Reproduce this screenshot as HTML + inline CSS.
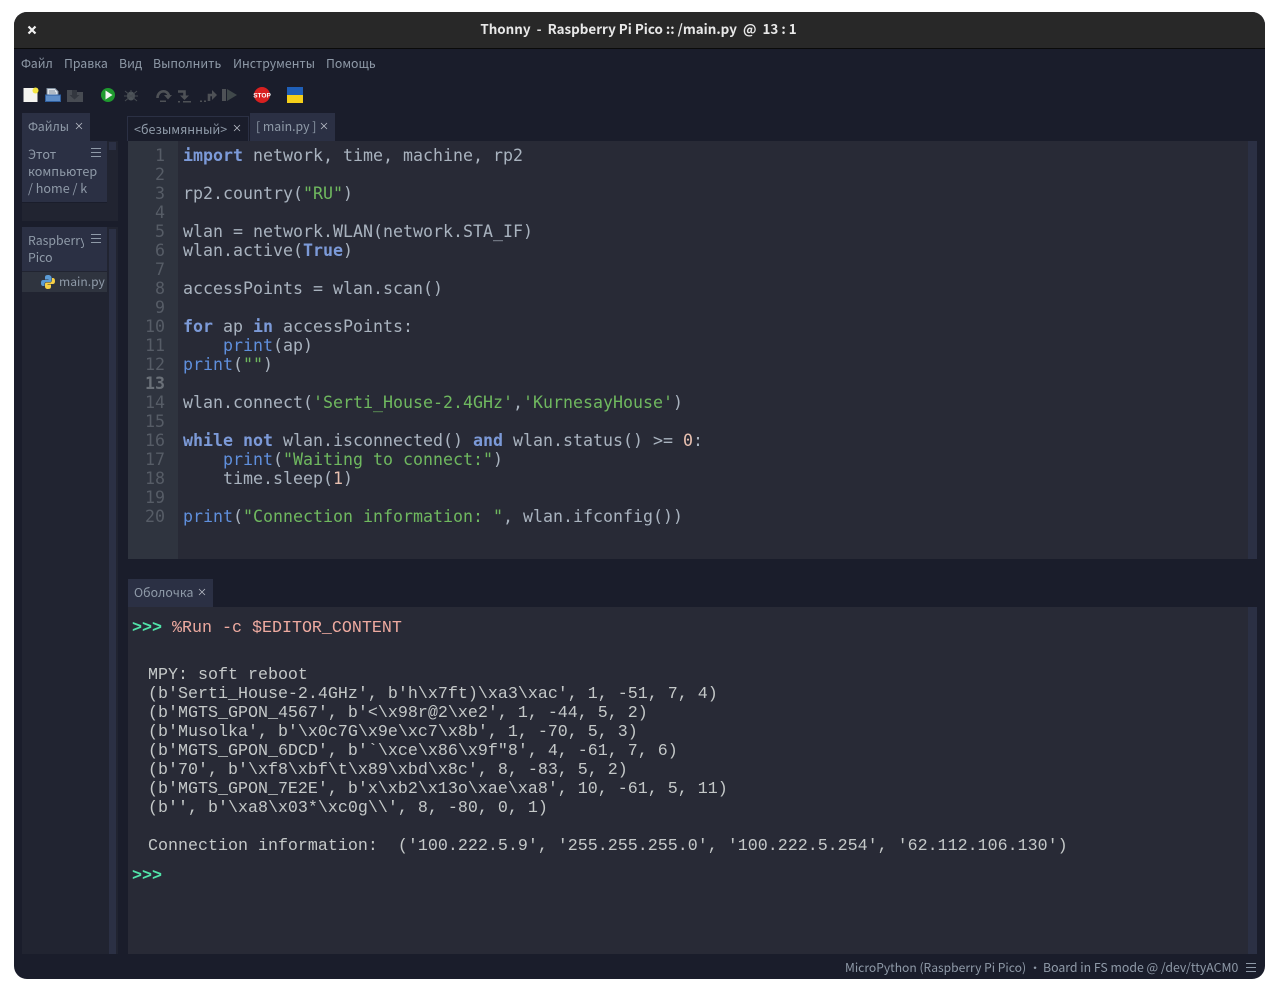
<!DOCTYPE html>
<html><head><meta charset="utf-8"><style>
html,body{margin:0;padding:0;width:1279px;height:996px;background:#fff;overflow:hidden}
.a{position:absolute}
#w{position:absolute;left:14px;top:12px;width:1251px;height:967px;background:#1a1d2b;border-radius:13px 13px 13px 13px;overflow:hidden}
#root{position:absolute;left:0;top:0;width:1279px;height:996px}
.u{position:absolute;font-family:"Noto Sans CJK SC","Liberation Sans",sans-serif;font-size:12.300px;line-height:17px;color:#8f9aa8;white-space:pre}
.m{position:absolute;font-family:"DejaVu Sans Mono","Liberation Mono",monospace;font-size:16.610px;line-height:19px;white-space:pre;color:#a9b3bf}
.k{color:#7c9ad8;font-weight:bold}.b{color:#5f8fdc}.s{color:#6fb85f}.n{color:#e8c0b0}
.g{color:#565c66;text-align:right;width:37px;left:128px}
.o{color:#c4c8c8;font-family:"Liberation Mono","DejaVu Sans Mono",monospace;font-size:16.670px}
</style></head><body><div id="root">
<div id="w"></div>
<div class="a" style="left:14px;top:12px;width:1251px;height:36px;background:#282828;border-radius:13px 13px 0 0"></div>
<div class="a" style="left:14px;top:48px;width:1251px;height:1px;background:#0a0a0a"></div>
<svg class="a" style="left:27px;top:25px" width="10" height="10"><path d="M1.500 1.500L8.500 8.500M8.500 1.500L1.500 8.500" stroke="#f2f2f2" stroke-width="2.200"/></svg>
<div class="u" style="left:-1px;width:1279px;text-align:center;top:20px;color:#e8e8e8;font-weight:bold;font-size:13.400px">Thonny  -  Raspberry Pi Pico :: /main.py  @  13 : 1</div>

<div class="u" style="left:21px;top:55px">Файл</div>
<div class="u" style="left:64px;top:55px">Правка</div>
<div class="u" style="left:119px;top:55px">Вид</div>
<div class="u" style="left:153px;top:55px">Выполнить</div>
<div class="u" style="left:233px;top:55px">Инструменты</div>
<div class="u" style="left:326px;top:55px">Помощь</div>

<svg class="a" style="left:20px;top:84px" width="300" height="22" viewBox="0 0 300 22">
<rect x="3.500" y="4" width="14" height="14" fill="#f4f4f0"/><circle cx="15.500" cy="6.500" r="3" fill="#f5e642"/>
<path d="M27 4.500h8l3 3v6H27z" fill="#e0e4ea" stroke="#8090a0"/><path d="M29 7h6M29 9h7" stroke="#8090a0"/><rect x="25.500" y="11" width="15" height="6.500" fill="#5f8ec8" stroke="#2f5f9f"/>
<path d="M47 6h8l2 2h6v10H47z" fill="#474b52"/><path d="M52 6h5v5h2.500l-5 4.500-5-4.500H52z" fill="#33373f"/>
<circle cx="88" cy="11" r="7" fill="#1f9a2f"/><path d="M85.500 6.500l7 4.500-7 4.500z" fill="#f2f2f2"/>
<ellipse cx="111" cy="12" rx="4" ry="4.500" fill="#4e545a"/><path d="M105 7l12 10M117 7L105 17M104 12h14M111 6v3" stroke="#474c52" stroke-width="1"/>
<path d="M137.500 14c0-8 10-9 11.500-2" fill="none" stroke="#4e5156" stroke-width="2.600"/><path d="M144 11h8l-4 4.500z" fill="#4e5156"/><rect x="140" y="16.500" width="6" height="1.500" fill="#4e5156"/>
<path d="M158 7.500h6.500v5" fill="none" stroke="#4e5156" stroke-width="2.600"/><path d="M160 11.500h9l-4.500 4.500z" fill="#4e5156"/><rect x="158" y="17" width="2" height="1.500" fill="#4e5156"/><rect x="163" y="17" width="8" height="1.500" fill="#4e5156"/>
<path d="M189 17v-6h4" fill="none" stroke="#4e5156" stroke-width="2.600"/><path d="M192 6v10l5-5z" fill="#4e5156"/><rect x="180" y="16.500" width="2" height="1.500" fill="#4e5156"/><rect x="184" y="16.500" width="2" height="1.500" fill="#4e5156"/>
<rect x="202" y="5" width="4" height="12" fill="#4e5156"/><path d="M207 5l10 6-10 6z" fill="#40484a"/>
<circle cx="242" cy="11" r="8" fill="#d82020"/>
<text x="242" y="13.500" font-family="Liberation Sans" font-size="6.500" font-weight="bold" fill="#fff" text-anchor="middle">STOP</text>
<rect x="267" y="3" width="16" height="8" fill="#1f5fb8"/><rect x="267" y="11" width="16" height="8" fill="#f5cf1a"/>
</svg>

<!-- left panels -->
<div class="a" style="left:22px;top:113px;width:68px;height:28px;background:#2b3044"></div>
<div class="u" style="left:28px;top:118px">Файлы</div>
<svg class="a" style="left:75px;top:122px" width="8" height="8"><path d="M1 1L7 7M7 1L1 7" stroke="#b8bcc6" stroke-width=".8"/></svg>
<div class="a" style="left:22px;top:141px;width:96px;height:80px;background:#212431"></div>
<div class="a" style="left:22px;top:141px;width:85px;height:61px;background:#2b3044;border-bottom:1px solid #1a1d2b"></div>
<div class="a" style="left:109px;top:142px;width:9px;height:79px;background:#212431"></div>
<div class="a" style="left:109px;top:142px;width:7px;height:8px;background:#2b3044"></div>
<div class="u" style="left:28px;top:145px;font-size:12.600px">Этот</div>
<div class="u" style="left:28px;top:162px;font-size:12.600px">компьютер</div>
<div class="u" style="left:28px;top:179px;font-size:12.600px">/ home / k</div>
<svg class="a" style="left:91px;top:148px" width="10" height="10"><path d="M0 .5h10M0 4.500h10M0 8.500h10" stroke="#8f9aa8"/></svg>

<div class="a" style="left:22px;top:227px;width:96px;height:727px;background:#212431"></div>
<div class="a" style="left:22px;top:227px;width:85px;height:44px;background:#2b3044"></div>
<div class="a" style="left:22px;top:272px;width:85px;height:20px;background:#2f343f"></div>
<div class="a" style="left:109px;top:229px;width:7px;height:725px;background:#2b3044"></div>
<div class="u" style="left:28px;top:232px;width:56px;overflow:hidden">Raspberry</div>
<div class="u" style="left:28px;top:249px">Pico</div>
<svg class="a" style="left:91px;top:234px" width="10" height="10"><path d="M0 .5h10M0 4.500h10M0 8.500h10" stroke="#8f9aa8"/></svg>
<svg class="a" style="left:40px;top:274px" width="16" height="16" viewBox="0 0 16 16"><path d="M8 1C5 1 5 2.500 5 4v1.500h3.500V6H3C1.500 6 1 7.500 1 9s.5 3 2 3h1.500v-2c0-1.500 1-2 2-2H10c1 0 1.500-.5 1.500-1.500V3.500C11.500 2 10 1 8 1z" fill="#5b9bd5"/><path d="M8 15c3 0 3-1.500 3-3v-1.500H7.500V10H13c1.500 0 2-1.500 2-3s-.5-3-2-3h-1v2c0 1.500-1 2.500-2 2.500H6.500C5.500 8.500 5 9 5 10v2.500C5 14 6 15 8 15z" fill="#f7d046"/></svg>
<div class="u" style="left:59px;top:273px;font-size:12.100px">main.py</div>

<!-- editor tabs -->
<div class="a" style="left:127px;top:116px;width:122px;height:25px;background:#1a1d2b;border:1px solid #2b3044;border-bottom:0;box-sizing:border-box"></div>
<div class="u" style="left:134px;top:120px;font-size:12.500px">&lt;безымянный&gt;</div>
<svg class="a" style="left:233px;top:124px" width="8" height="8"><path d="M1 1L7 7M7 1L1 7" stroke="#b8bcc6" stroke-width=".8"/></svg>
<div class="a" style="left:250px;top:113px;width:85px;height:28px;background:#2b3044"></div>
<div class="u" style="left:256px;top:118px">[ main.py ]</div>
<svg class="a" style="left:320px;top:122px" width="8" height="8"><path d="M1 1L7 7M7 1L1 7" stroke="#b8bcc6" stroke-width=".8"/></svg>

<!-- editor -->
<div class="a" style="left:128px;top:141px;width:1129px;height:418px;background:#282a36"></div>
<div class="a" style="left:128px;top:141px;width:50px;height:418px;background:#2f343f"></div>
<div class="a" style="left:1248px;top:141px;width:9px;height:418px;background:#2b3044"></div>
<div class="m g" style="top:146px;">1
2
3
4
5
6
7
8
9
10
11
12
<b style="color:#6a7078">13</b>
14
15
16
17
18
19
20</div>
<div class="m" style="left:183px;top:146px"><span class="k">import</span> network, time, machine, rp2

rp2.country(<span class="s">"RU"</span>)

wlan = network.WLAN(network.STA_IF)
wlan.active(<span class="k">True</span>)

accessPoints = wlan.scan()

<span class="k">for</span> ap <span class="k">in</span> accessPoints:
    <span class="b">print</span>(ap)
<span class="b">print</span>(<span class="s">""</span>)

wlan.connect(<span class="s">'Serti_House-2.4GHz'</span>,<span class="s">'KurnesayHouse'</span>)

<span class="k">while</span> <span class="k">not</span> wlan.isconnected() <span class="k">and</span> wlan.status() &gt;= <span class="n">0</span>:
    <span class="b">print</span>(<span class="s">"Waiting to connect:"</span>)
    time.sleep(<span class="n">1</span>)

<span class="b">print</span>(<span class="s">"Connection information: "</span>, wlan.ifconfig())</div>

<!-- shell -->
<div class="a" style="left:128px;top:579px;width:85px;height:28px;background:#2b3044"></div>
<div class="u" style="left:134px;top:584px">Оболочка</div>
<svg class="a" style="left:198px;top:588px" width="8" height="8"><path d="M1 1L7 7M7 1L1 7" stroke="#b8bcc6" stroke-width=".8"/></svg>
<div class="a" style="left:128px;top:607px;width:1129px;height:347px;background:#282a36"></div>
<div class="a" style="left:1248px;top:607px;width:9px;height:347px;background:#2b3044"></div>
<div class="m o" style="left:132px;top:619px;color:#50e3a8;font-weight:bold">&gt;&gt;&gt;</div>
<div class="m o" style="left:172px;top:619px;color:#eeaaa0">%Run -c $EDITOR_CONTENT</div>
<div class="m o" style="left:148px;top:666px">MPY: soft reboot
(b'Serti_House-2.4GHz', b'h\x7ft)\xa3\xac', 1, -51, 7, 4)
(b'MGTS_GPON_4567', b'&lt;\x98r@2\xe2', 1, -44, 5, 2)
(b'Musolka', b'\x0c7G\x9e\xc7\x8b', 1, -70, 5, 3)
(b'MGTS_GPON_6DCD', b'`\xce\x86\x9f"8', 4, -61, 7, 6)
(b'70', b'\xf8\xbf\t\x89\xbd\x8c', 8, -83, 5, 2)
(b'MGTS_GPON_7E2E', b'x\xb2\x13o\xae\xa8', 10, -61, 5, 11)
(b'', b'\xa8\x03*\xc0g\\', 8, -80, 0, 1)

Connection information:  ('100.222.5.9', '255.255.255.0', '100.222.5.254', '62.112.106.130')</div>
<div class="m o" style="left:132px;top:867px;color:#50e3a8;font-weight:bold">&gt;&gt;&gt;</div>

<div class="u" style="left:845px;top:959px;font-size:12.100px">MicroPython (Raspberry Pi Pico)</div>
<div class="u" style="left:1029px;top:959px;font-size:12.100px">•</div>
<div class="u" style="left:1043px;top:959px;font-size:12.300px">Board in FS mode @ /dev/ttyACM0</div>
<svg class="a" style="left:1246px;top:963px" width="10" height="10"><path d="M0 .5h10M0 4.500h10M0 8.500h10" stroke="#8f9aa8"/></svg>
</div></body></html>
